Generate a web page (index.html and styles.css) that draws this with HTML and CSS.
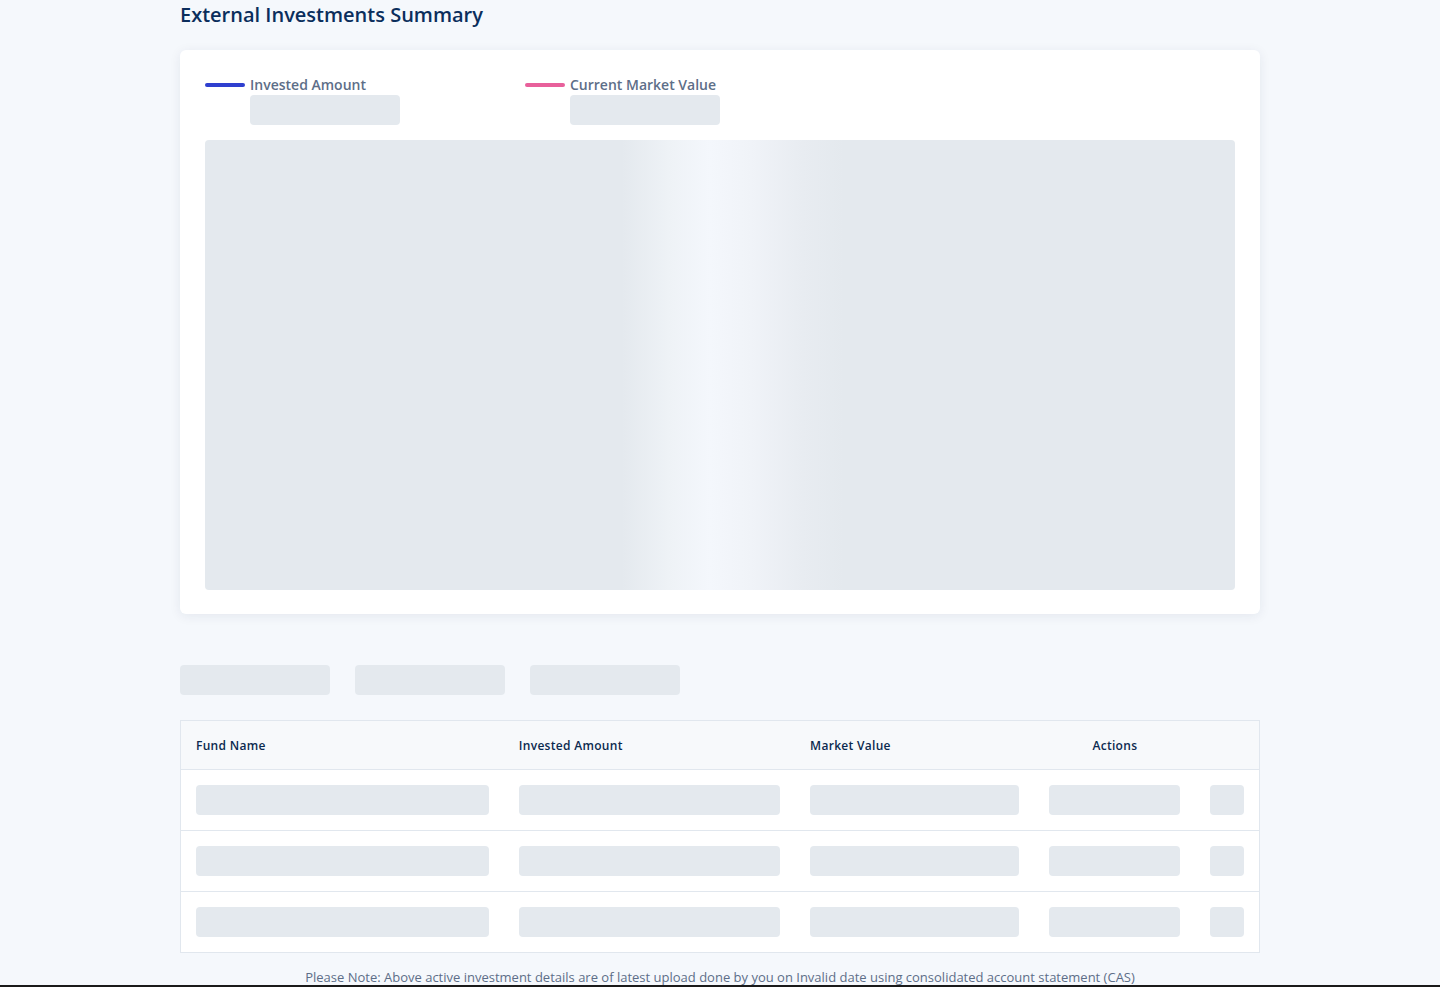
FILE: index.html
```html
<!DOCTYPE html>
<html lang="en">
<head>
    <meta charset="UTF-8">
    <meta name="viewport" content="width=device-width, initial-scale=1.0">
    <title>External Investments Summary</title>
    <link rel="stylesheet" href="styles.css">
</head>
<body>
    <div class="page">
        <h1 class="title">External Investments Summary</h1>
        <div class="chart-card">
            <div class="legend">
                <div class="legend-item">
                    <span class="legend-line blue"></span>
                    <div class="legend-body">
                        <div class="legend-label">Invested Amount</div>
                        <div class="skeleton legend-value"></div>
                    </div>
                </div>
                <div class="legend-item">
                    <span class="legend-line pink"></span>
                    <div class="legend-body">
                        <div class="legend-label">Current Market Value</div>
                        <div class="skeleton legend-value"></div>
                    </div>
                </div>
            </div>
            <div class="skeleton chart-area shimmer"></div>
        </div>
        <div class="tabs">
            <div class="skeleton tab"></div>
            <div class="skeleton tab"></div>
            <div class="skeleton tab"></div>
        </div>
        <table class="funds">
            <thead>
                <tr>
                    <th class="col-name">Fund Name</th>
                    <th class="col-invested">Invested Amount</th>
                    <th class="col-market">Market Value</th>
                    <th class="col-actions">Actions</th>
                    <th class="col-extra"></th>
                </tr>
            </thead>
            <tbody>
                <tr>
                    <td><div class="skeleton cell"></div></td>
                    <td><div class="skeleton cell"></div></td>
                    <td><div class="skeleton cell"></div></td>
                    <td><div class="skeleton cell"></div></td>
                    <td><div class="skeleton cell"></div></td>
                </tr>
                <tr>
                    <td><div class="skeleton cell"></div></td>
                    <td><div class="skeleton cell"></div></td>
                    <td><div class="skeleton cell"></div></td>
                    <td><div class="skeleton cell"></div></td>
                    <td><div class="skeleton cell"></div></td>
                </tr>
                <tr>
                    <td><div class="skeleton cell"></div></td>
                    <td><div class="skeleton cell"></div></td>
                    <td><div class="skeleton cell"></div></td>
                    <td><div class="skeleton cell"></div></td>
                    <td><div class="skeleton cell"></div></td>
                </tr>
            </tbody>
        </table>
        <p class="note">Please Note: Above active investment details are of latest upload done by you on Invalid date using consolidated account statement (CAS)</p>
    </div>
    <div class="bottom-edge"></div>
</body>
</html>
```

FILE: styles.css
```css
body {
    margin: 0;
    padding: 0;
    background-color: #f5f8fc;
    font-family: "Open Sans", "Noto Sans", Arial, sans-serif;
    color: #0b2a55;
}
.page {
    width: 1080px;
    margin: 0 auto;
}
.title {
    margin: 0;
    padding-top: 1px;
    height: 49px;
    font-size: 20px;
    font-weight: 600;
    line-height: 28px;
    color: #0b2e5c;
}
.chart-card {
    background-color: #ffffff;
    border-radius: 6px;
    box-shadow: 0 2px 12px rgba(20, 40, 80, 0.08);
    padding: 25px;
    height: 514px;
}
.legend {
    display: flex;
    height: 65px;
}
.legend-item {
    display: flex;
    align-items: flex-start;
    width: 320px;
}
.legend-line {
    display: block;
    width: 40px;
    height: 4px;
    border-radius: 2px;
    margin-top: 8px;
    margin-right: 5px;
}
.blue { background-color: #2f3fcf; }
.pink { background-color: #e8609b; }
.legend-label {
    font-size: 14px;
    line-height: 20px;
    color: #5d6e88;
    font-weight: 600;
}
.skeleton {
    background-color: #e4e9ee;
    border-radius: 4px;
}
.legend-value {
    width: 150px;
    height: 30px;
}
.chart-area {
    height: 450px;
}
.shimmer {
    background-image: linear-gradient(90deg,
        #e4e9ee 0%,
        #e4e9ee 40.5%,
        #eef2f6 45%,
        #f4f7fc 49%,
        #f0f3f8 53%,
        #e8ecf1 58%,
        #e4e9ee 62%,
        #e4e9ee 100%);
}
.tabs {
    display: flex;
    gap: 25px;
    margin-top: 51px;
}
.tab {
    width: 150px;
    height: 30px;
}
.funds {
    margin-top: 25px;
    width: 1080px;
    border-collapse: collapse;
    table-layout: fixed;
    background-color: #ffffff;
    border: 1px solid #e1e7ee;
}
.funds th,
.funds td {
    box-sizing: border-box;
    padding: 0 15px;
    border-bottom: 1px solid #e1e7ee;
    vertical-align: middle;
}
.funds th {
    height: 49px;
    background-color: #f7f9fb;
    font-size: 12px;
    font-weight: 600;
    letter-spacing: 0.3px;
    text-align: left;
    color: #0b2a4f;
}
.funds td {
    height: 61px;
}
.funds tbody tr:last-child td {
    border-bottom: none;
}
.col-name { width: 323px; }
.col-invested { width: 291px; }
.col-market { width: 239px; }
.funds th.col-actions { width: 161px; text-align: center; }
.col-extra { width: 64px; }
.cell {
    height: 30px;
}
.note {
    margin: 16px 0 0;
    text-align: center;
    font-size: 13px;
    line-height: 16px;
    color: #5d6e88;
}
.bottom-edge {
    position: fixed;
    left: 0;
    right: 0;
    bottom: 0;
    height: 2px;
    background-color: #1a1a1a;
}
```
